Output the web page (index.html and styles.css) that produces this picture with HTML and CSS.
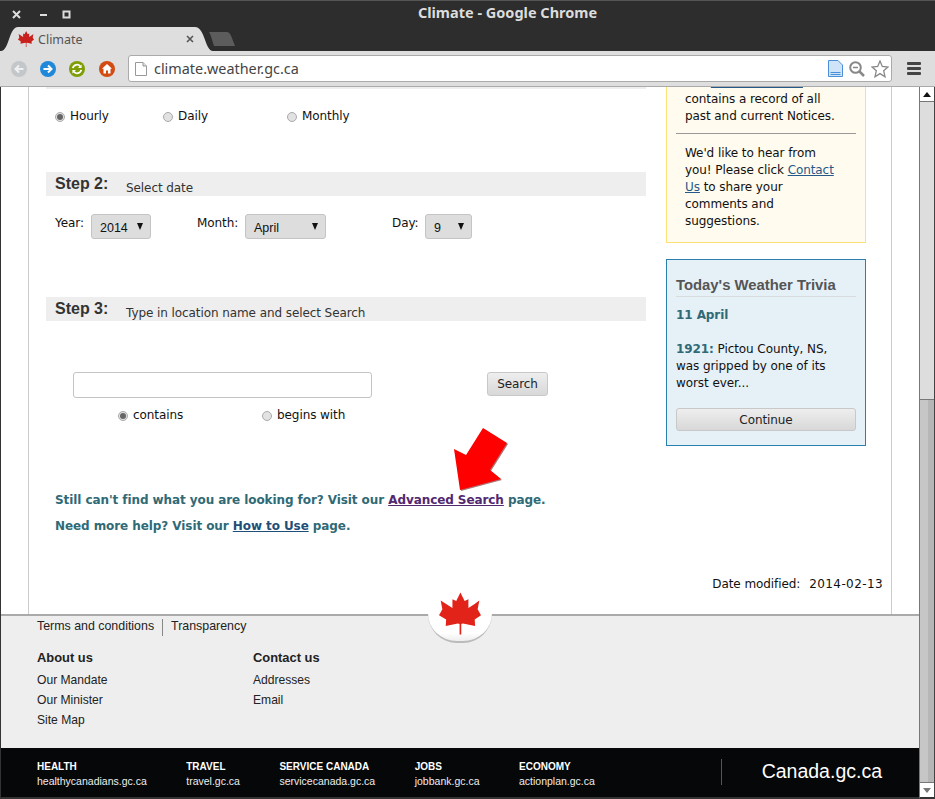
FILE: index.html
```html
<!DOCTYPE html>
<html>
	<head>
		<meta charset="UTF-8">
		<title>Climate</title>
		<link rel="stylesheet" href="styles.css">
	</head>
	<body>
		<svg class="defs" width="0" height="0">
			<symbol id="leaf" viewBox="0 0 100 100">
				<path d="M51 0L61 20L70 16L70 37L84 28L96 19L92 40L100 54L85 64L86 80L57 74L53 75L53 100L49 100L49 75L45 74L16 80L17 64L0 54L8 40L4 19L18 28L32 37L32 16L41 20Z"/>
			</symbol>
		</svg>

		<!-- window title + tabs -->
		<div class="titlebar">
			<div class="title-row">
				<div class="win-btns">
					<svg width="9" height="9" viewBox="0 0 9 9"><path d="M1 1L8 8M8 1L1 8" stroke="#ddd" stroke-width="2"/></svg>
					<svg width="9" height="9" viewBox="0 0 9 9"><path d="M1 5H8" stroke="#ddd" stroke-width="2"/></svg>
					<svg width="9" height="9" viewBox="0 0 9 9"><path d="M1.5 1.5H7.5V7.5H1.5Z" fill="none" stroke="#ddd" stroke-width="2"/></svg>
				</div>
				<div class="win-title">Climate - Google Chrome</div>
			</div>
			<div class="tab-row">
				<div class="tab">
					<svg class="tab-leaf" width="16" height="16"><use href="#leaf"/></svg>
					<span class="tab-name">Climate</span>
					<svg class="tab-x" width="8" height="8" viewBox="0 0 8 8"><path d="M1 1L7 7M7 1L1 7" stroke="#555" stroke-width="1.6"/></svg>
				</div>
				<div class="newtab"></div>
			</div>
		</div>

		<!-- toolbar -->
		<div class="toolbar">
			<svg class="nav" width="16" height="16" viewBox="0 0 16 16"><circle cx="8" cy="8" r="8" fill="#c3c7ca"/><path d="M12.5 8H4.5M8 4.5L4.5 8L8 11.5" fill="none" stroke="#eef0f1" stroke-width="2"/></svg>
			<svg class="nav" width="16" height="16" viewBox="0 0 16 16"><circle cx="8" cy="8" r="8" fill="#1f88d9"/><path d="M3.5 8H11.5M8 4.5L11.5 8L8 11.5" fill="none" stroke="#fff" stroke-width="2"/></svg>
			<svg class="nav" width="16" height="16" viewBox="0 0 16 16"><circle cx="8" cy="8" r="8" fill="#7f9e05"/><path d="M3.8 7.2A4.3 4.3 0 0 1 11.4 5.4M12.2 8.8A4.3 4.3 0 0 1 4.6 10.6" fill="none" stroke="#fff" stroke-width="1.7"/><path d="M12.6 3.4V7H9ZM3.4 12.6V9H7Z" fill="#fff"/></svg>
			<svg class="nav" width="16" height="16" viewBox="0 0 16 16"><circle cx="8" cy="8" r="8" fill="#d24b12"/><path d="M8 3L13 7.8H11.5V12.5H9V9.5H7V12.5H4.5V7.8H3Z" fill="#fff"/></svg>
			<div class="omnibox">
				<svg class="page-ic" width="12" height="14" viewBox="0 0 12 14"><path d="M.5.5H8L11.5 4V13.5H.5Z" fill="#fff" stroke="#999"/><path d="M8 .5V4H11.5" fill="#ddd" stroke="#999"/></svg>
				<span class="url">climate.weather.gc.ca</span>
				<div class="omni-icons">
					<svg width="15" height="17" viewBox="0 0 15 17"><path d="M.5.5H10L14.5 5V16.5H.5Z" fill="#cfe4f8" stroke="#4a90d9"/><path d="M2.5 12.5H12.500M2.500 14.500H12.500" stroke="#4a90d9"/></svg>
					<svg width="16" height="16" viewBox="0 0 16 16"><circle cx="6.500" cy="6.500" r="5.300" fill="none" stroke="#888" stroke-width="2"/><path d="M4 6.500H9" stroke="#888" stroke-width="1.500"/><path d="M10.500 10.500L15 15" stroke="#888" stroke-width="2.500"/></svg>
					<svg width="18" height="18" viewBox="0 0 18 18"><path d="M9 1L11.300 6.500L17 7L12.700 10.800L14 16.800L9 13.600L4 16.800L5.300 10.800L1 7L6.700 6.500Z" fill="#fff" stroke="#888" stroke-width="1.300"/></svg>
				</div>
			</div>
			<div class="menu-ic"><i></i><i></i><i></i></div>
		</div>

		<div class="viewport">
			<div class="page">
				<div class="main">
					<div class="columns">
						<div class="col-left">
							<div class="band-end"></div>
							<div class="radios first">
								<label class="radio w108"><span class="dot on"></span>Hourly</label>
								<label class="radio w124"><span class="dot"></span>Daily</label>
								<label class="radio"><span class="dot"></span>Monthly</label>
							</div>

							<div class="step step2"><b>Step 2:</b><span>Select date</span></div>
							<div class="date-row">
								<span class="lbl w36">Year:</span>
								<div class="sel w60">2014<i></i></div>
								<span class="lbl w48">Month:</span>
								<div class="sel w81">April<i></i></div>
								<span class="lbl w33">Day:</span>
								<div class="sel w47">9<i></i></div>
							</div>

							<div class="step step3"><b>Step 3:</b><span>Type in location name and select Search</span></div>
							<div class="search-row">
								<input class="loc" type="text">
								<button class="btn search">Search</button>
							</div>
							<div class="radios second">
								<label class="radio w144"><span class="dot on"></span>contains</label>
								<label class="radio"><span class="dot"></span>begins with</label>
							</div>

							<p class="help one">Still can't find what you are looking for? Visit our <a class="visited" href="#">Advanced Search</a> page.</p>
							<p class="help two">Need more help? Visit our <a href="#">How to Use</a> page.</p>
						</div>

						<div class="col-side">
							<div class="notice">
								<p class="note-text">The <a href="#">Notices Archive</a><br>contains a record of all past and current Notices.</p>
								<hr>
								<p class="note-text">We'd like to hear from you! Please click <a href="#">Contact Us</a> to share your comments and suggestions.</p>
							</div>
							<div class="trivia">
								<h3>Today's Weather Trivia</h3>
								<p class="t-date">11 April</p>
								<p class="t-body"><b>1921:</b> Pictou County, NS, was gripped by one of its worst ever...</p>
								<button class="btn cont">Continue</button>
							</div>
						</div>
					</div>
					<div class="modified"><span>Date modified:</span><span class="mod-date">2014-02-13</span></div>
				</div>

				<div class="footer">
					<div class="bump"></div>
					<svg class="big-leaf" width="42" height="43"><use href="#leaf"/></svg>
					<div class="foot-top"><a href="#">Terms and conditions</a><a href="#">Transparency</a></div>
					<div class="foot-cols">
						<div class="foot-col">
							<h4>About us</h4>
							<a href="#">Our Mandate</a>
							<a href="#">Our Minister</a>
							<a href="#">Site Map</a>
						</div>
						<div class="foot-col">
							<h4>Contact us</h4>
							<a href="#">Addresses</a>
							<a href="#">Email</a>
						</div>
					</div>
				</div>

				<div class="blackbar">
					<div class="bb-item"><b>HEALTH</b><span>healthycanadians.gc.ca</span></div>
					<div class="bb-item"><b>TRAVEL</b><span>travel.gc.ca</span></div>
					<div class="bb-item"><b>SERVICE CANADA</b><span>servicecanada.gc.ca</span></div>
					<div class="bb-item"><b>JOBS</b><span>jobbank.gc.ca</span></div>
					<div class="bb-item"><b>ECONOMY</b><span>actionplan.gc.ca</span></div>
					<div class="bb-canada">Canada.gc.ca</div>
				</div>
			</div>

			<div class="scrollbar">
				<div class="sb-btn"><i class="up"></i></div>
				<div class="sb-track"></div>
				<div class="sb-thumb"></div>
				<div class="sb-btn"><i class="down"></i></div>
			</div>
		</div>

		<svg class="arrow" width="60" height="70" viewBox="450 425 60 70"><path d="M460 490L454 449L466 455L483 428L507 443L490 470L501 479Z" fill="#f00"/></svg>
	</body>
</html>
```

FILE: styles.css
```css
*{box-sizing: border-box;}
html,body{margin: 0; padding: 0;}
body{width: 935px; height: 799px; overflow: hidden; position: relative; background: #fff; font-family: "DejaVu Sans", Verdana, sans-serif; font-size: 12px; letter-spacing: -.08px; line-height: 17px; color: #111;}
a{color: #25598a;}
p{margin: 0;}
.defs{position: absolute;}

.titlebar{height: 51px; background: #2d2d2d; border-top: 1px solid #555;}
.title-row{height: 26px; display: flex; align-items: center; position: relative;}
.win-btns{display: flex; gap: 18px; padding-left: 12px; align-items: center; width: 100px;}
.win-btns svg:nth-child(3){margin-left: -4px;}
.win-title{position: absolute; left: 0; right: 0; top: -1px; text-align: center; font-family: "Noto Sans", sans-serif; font-weight: bold; font-size: 14.5px; letter-spacing: 0; color: #dcdcdc; line-height: 24px; padding-left: 80px;}
.tab-row{height: 24px; display: flex; align-items: flex-end; padding-left: 1px;}
.tab{width: 212px; height: 24px; background: #dedede; clip-path: path('M0 24C8 24 8 0 17 0L194 0C204 0 204 24 212 24Z'); display: flex; align-items: center; padding-left: 17px; font-family: "Noto Sans", sans-serif; font-size: 12.5px; letter-spacing: 0; color: #555;}
.tab-leaf{fill: #c8201c; margin-right: 4px;}
.tab-name{width: 148px;}
.newtab{width: 26px; height: 14px; margin: 0 0 5px -4px; background: #5c5c5c; clip-path: path('M0 0H18C21 0 22 3 26 14H5C3 8 2 3 0 0Z');}

.toolbar{height: 36px; background: #dedede; border-bottom: 1px solid #aaa; display: flex; align-items: center; padding-left: 11px;}
.nav{margin-right: 13px; flex: none;}
.nav:nth-child(4){margin-left: 1px;}
.omnibox{width: 764px; height: 27px; background: #fff; border: 1px solid #aaa; border-radius: 3px; display: flex; align-items: center; padding-left: 6px; flex: none;}
.page-ic{margin-right: 7px;}
.url{font-family: "Noto Sans", sans-serif; font-size: 14.4px; letter-spacing: 0; color: #444;}
.omni-icons{margin-left: auto; display: flex; gap: 6px; align-items: center; padding-right: 2px;}
.menu-ic{margin-left: 15px; display: flex; flex-direction: column; gap: 2px;}
.menu-ic i{display: block; width: 14px; height: 3px; background: #444; border-radius: 1px;}

.viewport{height: 712px; display: flex; border-left: 1px solid #333;}
.page{width: 918px; display: flex; flex-direction: column;}
.main{height: 527px; margin-left: 27px; width: 864px; border-left: 1px solid #ccc; border-right: 1px solid #ccc; overflow: hidden; padding: 0 0 0 16px;}
.columns{display: flex; gap: 20px; height: 489px;}
.col-left{width: 601px;}
.col-side{width: 200px;}

.band-end{height: 2px; background: #eee; margin-left: 1px;}
.radios{display: flex;}
.radios.first{margin: 19px 0 0 10px;}
.radios.second{margin: 9px 0 0 73px;}
.radio{display: flex; align-items: center;}
.w108{width: 108px;}
.w124{width: 124px;}
.w144{width: 144px;}
.dot{width: 10px; height: 10px; margin-right: 5px; border-radius: 50%; border: 1px solid #aaa; background: #e2e2e2; display: flex; align-items: center; justify-content: center;}
.dot.on::after{content: ""; width: 6px; height: 6px; border-radius: 50%; background: #666;}

.step{height: 24px; background: #eee; display: flex; margin-left: 1px; padding-left: 9px;}
.step b{width: 71px; font-family: "Liberation Sans", Arial, sans-serif; font-size: 16px; letter-spacing: 0; line-height: 24px; color: #333;}
.step span{line-height: 17px; padding-top: 8px; color: #333;}
.step2{margin-top: 47px;}
.step3{margin-top: 58px;}

.date-row{display: flex; align-items: flex-start; margin: 18px 0 0 10px;}
.lbl{line-height: 17px; padding-top: 1px;}
.w36{width: 36px;}
.w48{width: 48px; margin-left: 46px;}
.w33{width: 33px; margin-left: 66px;}
.sel{height: 25px; background: #ddd; border: 1px solid #c4c4c4; border-radius: 3px; font-family: "Liberation Sans", Arial, sans-serif; font-size: 12.5px; letter-spacing: 0; line-height: 24px; padding: 1px 0 0 8px; position: relative; color: #111;}
.sel i{position: absolute; top: 8px; right: 7px; border-left: 3.500px solid transparent; border-right: 3.500px solid transparent; border-top: 7px solid #111;}
.w60{width: 60px;}
.w81{width: 81px;}
.w47{width: 47px;}

.search-row{display: flex; margin: 51px 0 0 28px; align-items: flex-start;}
.loc{width: 299px; height: 26px; border: 1px solid #c4c4c4; border-radius: 3px; background: #fff; padding: 0;}
.btn{background: linear-gradient(#eee, #d8d8d8); border: 1px solid #c8c8c8; border-radius: 3px; font-family: "DejaVu Sans", Verdana, sans-serif; font-size: 12px; letter-spacing: -.08px; color: #222; padding: 0;}
.search{width: 61px; height: 24px; margin-left: 115px;}

.help{font-weight: bold; color: #2f6a76; white-space: nowrap; margin-left: 10px;}
.help a{color: #1f4f78;}
.help a.visited{color: #52286f;}
.help.one{margin-top: 68px;}
.help.two{margin-top: 9px;}

.notice{height: 156px; background: #fffbee; border: 1px solid #ffe074; border-top: 0; padding: 0 21px 0 9px; overflow: hidden;}
.note-text{padding: 0 0 0 9px; margin-top: -13px; color: #111;}
.notice hr{height: 1px; border: 0; background: #999; margin: 8px -12px 11px 0;}
.notice hr + .note-text{margin-top: 0;}
.trivia{height: 187px; margin-top: 16px; background: #e6f0f7; border: 1px solid #2a7fae; padding: 15px 9px 0;}
.trivia h3{margin: 0; font-family: "Liberation Sans", Arial, sans-serif; font-size: 14.85px; letter-spacing: 0; line-height: 21px; height: 22px; color: #555; border-bottom: 1px solid #d8dcdf;}
.t-date{font-weight: bold; color: #2f6a76; margin-top: 10px;}
.t-body{margin-top: 17px; padding-right: 20px;}
.t-body b{color: #2f6a76;}
.cont{width: 180px; height: 23px; margin-top: 16px; display: block;}

.modified{display: flex; justify-content: flex-end; gap: 9px; padding-right: 8px; height: 17px;}
.mod-date{letter-spacing: .4px;}

.footer{height: 134px; background: #eee; border-top: 2px solid #aaa; position: relative; font-family: "Liberation Sans", Arial, sans-serif; font-size: 12.1px; letter-spacing: 0; padding-left: 36px;}
.footer a{color: #222; text-decoration: none;}
.bump{position: absolute; left: 427px; top: -2px; width: 64px; height: 29px; background: linear-gradient(#fff 70%, #eee); border-bottom: 2px solid #bbb; border-radius: 0 0 32px 32px;}
.big-leaf{position: absolute; left: 438px; top: -24px; fill: #e2231a;}
.foot-top{display: flex; padding-top: 3px; height: 20px;}
.foot-top a{font-size: 12.4px; line-height: 15px;}
.foot-top a + a{margin-left: 8px; padding-left: 8px; border-left: 1px solid #888;}
.foot-cols{display: flex; margin-top: 13px;}
.foot-col{width: 216px; display: flex; flex-direction: column;}
.foot-col h4{margin: 0 0 4px; font-size: 12.9px; line-height: 17px; color: #222;}
.foot-col a{line-height: 20px;}

.blackbar{height: 51px; background: #050708; border-bottom: 2px solid #333; display: flex; gap: 39.5px; align-items: flex-start; padding: 12px 0 0 36px; font-family: "Liberation Sans", Arial, sans-serif; letter-spacing: 0; color: #eee; position: relative;}
.bb-item{display: flex; flex-direction: column; font-size: 10.5px; line-height: 14px;}
.bb-item b{color: #fff; font-size: 10px;}
.bb-canada{position: absolute; right: 37px; top: 11px; width: 161px; height: 26px; border-left: 1px solid #555; text-align: right; font-size: 19.500px; line-height: 24px; color: #fff;}

.scrollbar{width: 16px; display: flex; flex-direction: column; border-left: 1px solid #777; border-right: 1px solid #444; border-bottom: 2px solid #333;}
.sb-btn{height: 15px; background: #fff; border-bottom: 1px solid #777; display: flex; align-items: center; justify-content: center;}
.sb-btn:last-child{border-bottom: 0; border-top: 1px solid #777;}
.sb-btn i{border-left: 4px solid transparent; border-right: 4px solid transparent;}
.sb-btn .up{border-bottom: 5px solid #111;}
.sb-btn .down{border-top: 5px solid #777;}
.sb-track{height: 297px; background: #ddd;}
.sb-thumb{flex: 1; border-top: 1px solid #777; background: linear-gradient(90deg, #c6c6c6 55%, #b6b6b6 55%);}

.arrow{position: absolute; left: 450px; top: 425px; filter: drop-shadow(1px 1px 0 #a77);}
```
